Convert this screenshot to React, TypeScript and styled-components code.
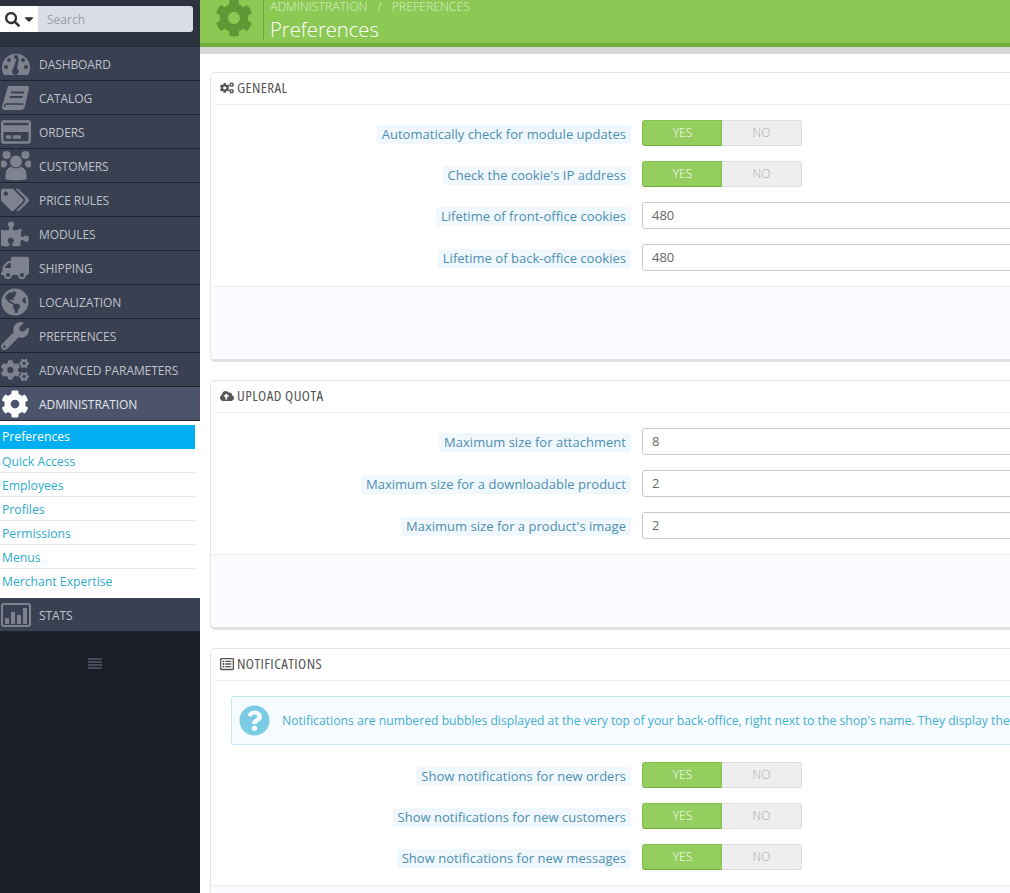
import React from "react";
import styled, { createGlobalStyle } from "styled-components";
import { FaCaretDown, FaCloudUploadAlt, FaCog, FaCogs, FaGlobeAmericas, FaPuzzlePiece, FaQuestionCircle, FaRegCreditCard, FaRegListAlt, FaSearch, FaTags, FaTruck, FaWrench } from "react-icons/fa";

const BG = "#394051";
const Global = createGlobalStyle`
  html, body { margin: 0; padding: 0; height: 893px; overflow: hidden; background: #fff; }
  body { font-family: "Open Sans", "Liberation Sans", sans-serif; font-size: 13px; }
`;
const Page = styled.div`display: flex; width: 1010px; height: 893px; overflow: hidden;`;
const Sidebar = styled.nav`width: 200px; flex: none; background: #1b1e27; display: flex; flex-direction: column;`;
const SearchStrip = styled.div`height: 47px; padding-top: 6px; box-sizing: border-box; background: #2d3240; border-bottom: 1px solid #262a36; display: flex; align-items: flex-start;`;
const SearchButton = styled.div`width: 38px; height: 26px; box-sizing: border-box; background: #fff; display: flex; align-items: center; padding-left: 5px; gap: 2px; color: #333; font-size: 15px;`;
const SearchField = styled.div`width: 155px; height: 26px; box-sizing: border-box; background: #d9dde6; border-radius: 0 3px 3px 0; padding-left: 9px; color: #9a9ea8; font-size: 12px; line-height: 27px;`;
const MenuItem = styled.div<{ $active?: boolean }>`
  height: 34px; box-sizing: border-box; display: flex; align-items: center; background: ${p => p.$active ? "#4b546b" : BG};
  border-bottom: 1px solid #1f2430; color: ${p => p.$active ? "#e4e6ea" : "#bfc2ca"}; font-size: 12px; letter-spacing: -0.08px; text-transform: uppercase;
`;
const MenuLabel = styled.span`position: relative; top: 1px;`;
const MenuIcon = styled.span<{ $active?: boolean; $flip?: boolean }>`
  width: 39px; flex: none; display: flex; align-items: center; padding-left: 1px; box-sizing: border-box;
  color: ${p => p.$active ? "#fff" : "#7e828e"}; font-size: 28px;
  svg { ${p => p.$flip ? "transform: scaleX(-1);" : ""} }
`;
const SubMenu = styled.ul`list-style: none; margin: 0; padding: 4px 5px 5px 0; background: #fff;`;
const SubItem = styled.li<{ $active?: boolean }>`
  height: 24px; box-sizing: border-box; padding-left: 2px; line-height: ${p => p.$active ? 23 : 25}px; font-size: 12.2px;
  color: ${p => p.$active ? "#fff" : "#2eacce"}; background: ${p => p.$active ? "#00aff0" : "#fff"};
  border-bottom: 1px solid ${p => p.$active ? "#00aff0" : "#e0eef2"};
  &:last-child { border-bottom: 0; }
`;
const Collapse = styled.div`display: flex; justify-content: center; padding: 26px 10px 0 0; color: #454a58;`;
const Main = styled.main`flex: 1; min-width: 0; overflow: hidden;`;
const Head = styled.header`height: 54px; box-sizing: border-box; background: #8bc954; border-bottom: 7px solid #d6d6d6; position: relative; display: flex; &::after { content: ""; position: absolute; left: 0; right: 0; bottom: 0; height: 4px; background: #72ad3e; }`;
const HeadIcon = styled.div`width: 63px; flex: none; display: flex; justify-content: center; align-items: center; color: #5d9a36; font-size: 38px; height: 36px; padding-left: 5px; box-sizing: border-box;`;
const HeadText = styled.div`border-left: 1px solid #6ba53e; height: 40px; padding-left: 6px;`;
const Crumbs = styled.div`font-size: 12.3px; line-height: 13px; font-weight: 300; color: #dcefca; text-transform: uppercase; display: flex; gap: 10px;`;
const Title = styled.h1`margin: 3px 0 0; font-size: 20.2px; line-height: 26px; font-weight: 300; color: #fff;`;
const Content = styled.div`padding: 18px 0 0 10px; width: 1100px; display: flex; flex-direction: column; gap: 18px;`;
const Panel = styled.section`border: 1px solid #e6e6e6; border-bottom: 3px solid #e1e1e1; border-radius: 5px; background: #fff;`;
const PanelTitle = styled.h3`margin: 0 4px; height: 32px; box-sizing: border-box; border-bottom: 1px solid #eee; display: flex; align-items: center; gap: 3px; padding: 0 0 4px 5px; font-family: "Open Sans", sans-serif; font-stretch: 75%; font-size: 15px; letter-spacing: 0.42px; font-weight: 400; color: #555; text-transform: uppercase; svg { font-size: 14px; flex: none; position: relative; top: 1px; }`;
const PanelBody = styled.div`padding: 15px 0 0; display: flex; flex-direction: column; gap: 15px;`;
const Row = styled.div`display: flex; align-items: center;`;
const LabelCell = styled.div`width: 420px; flex: none; text-align: right; padding-top: 2px;`;
const LabelChip = styled.span`display: inline-block; background: #f0f8fd; color: #4d8fb0; border-radius: 3px; padding: 0 5px; line-height: 19px; font-size: 13px; letter-spacing: 0.02px;`;
const Control = styled.div`margin-left: 11px; flex: 1;`;
const Input = styled.div`height: 27px; box-sizing: border-box; border: 1px solid #c7c7c7; border-radius: 3px; padding-left: 9px; line-height: 25px; color: #666; font-size: 13px;`;
const Toggle = styled.div`display: flex; width: 160px; height: 26px; font-size: 12px; font-weight: 300; text-align: center;`;
const Yes = styled.div`width: 80px; box-sizing: border-box; padding-left: 1px; background: #93ce5f; border: 1px solid #83c24c; border-bottom-color: #72ad3e; border-radius: 3px 0 0 3px; color: #fff; line-height: 24px;`;
const No = styled.div`width: 80px; background: #eee; border: 1px solid #dedede; border-left: 0; box-sizing: border-box; border-radius: 0 3px 3px 0; color: #aaa; line-height: 24px;`;
const Footer = styled.div`height: 72px; margin-top: 15px; background: #fafbfe; border-top: 1px solid #eee; border-radius: 0 0 4px 4px;`;
const Alert = styled.div`margin: 0 20px 2px; height: 49px; box-sizing: border-box; background: #f5fbfe; border: 1px solid #c5e8f0; border-radius: 3px; display: flex; align-items: center; gap: 12px; padding-left: 7px; color: #45aed0; font-size: 12.2px; white-space: nowrap; svg { font-size: 31px; color: #7bcae6; flex: none; }`;

const GaugeIcon = () => (
  <svg width="30" height="24" viewBox="0 0 30 24" fill="currentColor">
    <path d="M3 23a14 14 0 1 1 24 0Z" />
    <g fill={BG}><circle cx="5" cy="15" r="2" /><circle cx="8" cy="8" r="2" /><circle cx="15" cy="5" r="2" /><circle cx="22" cy="8" r="2" /><circle cx="25" cy="15" r="2" /><path d="M16 5.5l2 1-2 10a3.4 3.4 0 1 1-4 0.5Z" /></g>
  </svg>
);
const BookIcon = () => (
  <svg width="29" height="24" viewBox="0 0 29 24" fill="currentColor">
    <path d="M7 0H26a2 2 0 0 1 2 2.5L23.5 21.500a3 3 0 0 1-3 2.500H4a3 3 0 0 1-3-3.500Z" />
    <g fill="none" stroke={BG}><path strokeWidth="2" d="M10 6.500H23M8.800 11H21.500" /><path strokeWidth="1.500" d="M22.500 18H6a2 2 0 0 0-2 3" /></g>
  </svg>
);
const UsersIcon = () => (
  <svg width="30" height="31" viewBox="0 0 30 31" fill="currentColor">
    <circle cx="5.500" cy="5" r="4" /><circle cx="24.500" cy="5" r="4" /><circle cx="2.500" cy="14" r="3.500" /><circle cx="27.500" cy="14" r="3.500" />
    <path d="M4 30v-6a11 9 0 0 1 22 0v6q-11 2-22 0Z" stroke={BG} />
    <circle cx="15" cy="11.500" r="6.500" stroke={BG} />
  </svg>
);
const StatsIcon = () => (
  <svg width="30" height="24" viewBox="0 0 30 24" fill="currentColor"><path fillRule="evenodd" d="M3 0h24a3 3 0 0 1 3 3v18a3 3 0 0 1-3 3H3a3 3 0 0 1-3-3V3a3 3 0 0 1 3-3zm0 2a1 1 0 0 0-1 1v18a1 1 0 0 0 1 1h24a1 1 0 0 0 1-1V3a1 1 0 0 0-1-1z" /><rect x="4" y="15" width="4" height="6" /><rect x="10" y="9" width="4" height="12" /><rect x="16" y="12" width="4" height="9" /><rect x="22" y="5" width="4" height="16" /></svg>
);
const LinesIcon = () => (
  <svg width="14" height="12" viewBox="0 0 14 12" fill="currentColor"><rect y="0" width="14" height="2" /><rect y="3" width="14" height="2" /><rect y="6" width="14" height="2" /><rect y="9" width="14" height="2" /></svg>
);

const menu: [string, React.ReactNode, boolean?][] = [
  ["Dashboard", <GaugeIcon />], ["Catalog", <BookIcon />], ["Orders", <FaRegCreditCard style={{ fontSize: 30 }} />], ["Customers", <UsersIcon />],
  ["Price Rules", <FaTags />], ["Modules", <FaPuzzlePiece />], ["Shipping", <FaTruck />, true], ["Localization", <FaGlobeAmericas />],
  ["Preferences", <FaWrench />], ["Advanced Parameters", <FaCogs />],
];
const subs = ["Quick Access", "Employees", "Profiles", "Permissions", "Menus", "Merchant Expertise"];

const ToggleRow = ({ label }: { label: string }) => (
  <Row><LabelCell><LabelChip>{label}</LabelChip></LabelCell><Control><Toggle><Yes>YES</Yes><No>NO</No></Toggle></Control></Row>
);
const InputRow = ({ label, value }: { label: string; value: string }) => (
  <Row><LabelCell><LabelChip>{label}</LabelChip></LabelCell><Control><Input>{value}</Input></Control></Row>
);

export default function App() {
  return (
    <Page>
      <Global />
      <Sidebar>
        <SearchStrip>
          <SearchButton><FaSearch /><FaCaretDown style={{ fontSize: 14 }} /></SearchButton>
          <SearchField>Search</SearchField>
        </SearchStrip>
        {menu.map(([t, i, flip]) => <MenuItem key={t}><MenuIcon $flip={flip}>{i}</MenuIcon><MenuLabel>{t}</MenuLabel></MenuItem>)}
        <MenuItem $active><MenuIcon $active><FaCog /></MenuIcon><MenuLabel>Administration</MenuLabel></MenuItem>
        <SubMenu>
          <SubItem $active>Preferences</SubItem>
          {subs.map(s => <SubItem key={s}>{s}</SubItem>)}
        </SubMenu>
        <MenuItem><MenuIcon><StatsIcon /></MenuIcon><MenuLabel>Stats</MenuLabel></MenuItem>
        <Collapse><LinesIcon /></Collapse>
      </Sidebar>
      <Main>
        <Head>
          <HeadIcon><FaCog /></HeadIcon>
          <HeadText>
            <Crumbs><span>Administration</span><span>/</span><span>Preferences</span></Crumbs>
            <Title>Preferences</Title>
          </HeadText>
        </Head>
        <Content>
          <Panel>
            <PanelTitle><FaCogs />General</PanelTitle>
            <PanelBody>
              <ToggleRow label="Automatically check for module updates" />
              <ToggleRow label="Check the cookie's IP address" />
              <InputRow label="Lifetime of front-office cookies" value="480" />
              <InputRow label="Lifetime of back-office cookies" value="480" />
            </PanelBody>
            <Footer />
          </Panel>
          <Panel>
            <PanelTitle><FaCloudUploadAlt />Upload quota</PanelTitle>
            <PanelBody>
              <InputRow label="Maximum size for attachment" value="8" />
              <InputRow label="Maximum size for a downloadable product" value="2" />
              <InputRow label="Maximum size for a product's image" value="2" />
            </PanelBody>
            <Footer />
          </Panel>
          <Panel>
            <PanelTitle><FaRegListAlt />Notifications</PanelTitle>
            <PanelBody>
              <Alert><FaQuestionCircle />Notifications are numbered bubbles displayed at the very top of your back-office, right next to the shop's name. They display the number of new items since you last clicked on them.</Alert>
              <ToggleRow label="Show notifications for new orders" />
              <ToggleRow label="Show notifications for new customers" />
              <ToggleRow label="Show notifications for new messages" />
            </PanelBody>
            <Footer />
          </Panel>
        </Content>
      </Main>
    </Page>
  );
}
